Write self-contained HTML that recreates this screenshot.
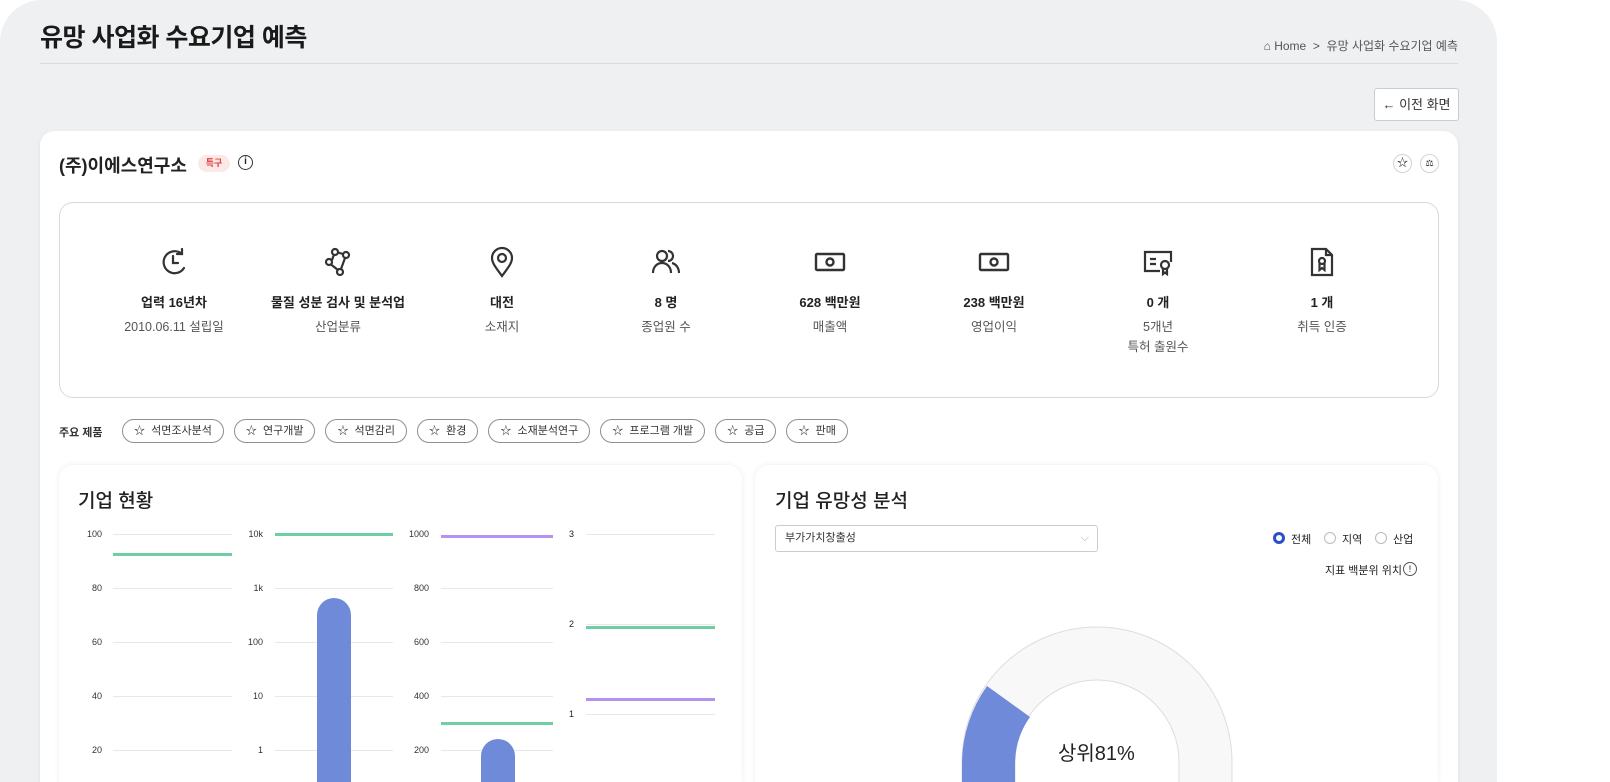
<!DOCTYPE html>
<html style="width:1610px;height:782px;overflow:hidden"><head><meta charset="utf-8"><style>
*{box-sizing:border-box;margin:0;padding:0}
body{width:1610px;height:782px;overflow:hidden;background:#fff;font-family:"Liberation Sans","Noto Sans CJK KR",sans-serif;color:#222;position:relative}
.abs{position:absolute}
.panel{left:0;top:0;width:1497px;height:782px;background:#eff0f2;border-radius:42px 42px 0 0}
h1{position:absolute;left:40px;top:18px;font-size:25px;font-weight:700;color:#1a1a1a;letter-spacing:-0.5px}
.hr{left:40px;top:63px;width:1418px;height:1px;background:#d9dbe0}
.bc{right:152px;top:37px;font-size:12px;color:#555}
.btn{left:1374px;top:88px;width:85px;height:33px;background:#fff;border:1px solid #c9ccd3;border-radius:3px;font-size:13px;color:#333;text-align:center;line-height:31px}
.card{left:40px;top:131px;width:1418px;height:651px;background:#fff;border-radius:14px 14px 0 0;box-shadow:0 1px 4px rgba(0,0,0,.08)}
.cname{left:59px;top:152px;font-size:18px;font-weight:700;color:#222}
.tag{left:198px;top:155px;width:32px;height:17px;background:#fde8e8;color:#e0403c;font-size:9px;border-radius:9px;text-align:center;line-height:17px;font-weight:700}
.circ{width:19px;height:19px;border:1px solid #d0d3d8;border-radius:50%;top:154px}
.info{left:59px;top:202px;width:1380px;height:196px;border:1px solid #d6d9de;border-radius:14px}
.it{position:absolute;top:246px;width:160px;text-align:center}
.it svg{display:block;margin:0 auto 14px}
.it b{display:block;font-size:13px;font-weight:700;color:#222;margin-bottom:6px}
.it span{font-size:12.5px;color:#555;line-height:20px}
.pl{left:59px;top:424px;font-size:11px;font-weight:700;color:#333}
.chips{left:122px;top:419px;display:flex;gap:10px}
.chip{height:24px;border:1px solid #8a8f98;border-radius:12px;padding:0 11px;font-size:11px;color:#333;line-height:22px}
.sub{background:#fff;border-radius:14px 14px 0 0;box-shadow:0 0 6px rgba(0,0,0,.08);top:465px;height:317px}
.st{font-size:19px;font-weight:500;color:#222;top:486px}
.ax{font-size:9px;color:#333;text-align:right;width:30px}
.gl{height:1px;background:#e8e8e8}
.ln{height:3px}
.g{background:#6fcfa3}.p{background:#b392f0}
.bar{background:#6f8ad9;border-radius:17px 17px 0 0}
</style></head><body>
<div class="abs panel"></div>
<h1>유망 사업화 수요기업 예측</h1>
<div class="abs bc">⌂ Home &nbsp;&gt;&nbsp; 유망 사업화 수요기업 예측</div>
<div class="abs hr"></div>
<div class="abs btn">← 이전 화면</div>
<div class="abs card"></div>
<div class="abs cname">(주)이에스연구소</div>
<div class="abs tag">특구</div>
<div class="abs" style="left:238px;top:155px;width:15px;height:15px;border:1.5px solid #333;border-radius:50%;font-size:10px;text-align:center;line-height:12px;font-weight:700">i</div>
<div class="abs circ" style="left:1393px;font-size:11px;text-align:center;line-height:17px">☆</div>
<div class="abs circ" style="left:1420px;font-size:9px;text-align:center;line-height:17px">⚖</div>
<div class="abs info"></div>

<div class="it" style="left:94px"><svg width="32" height="32" viewBox="0 0 32 32" fill="none" stroke="#333" stroke-width="2.2" stroke-linecap="round"><path d="M24 8A11 11 0 1 0 26 22"/><path d="M24 3v5h-5"/><path d="M15 10v7h5"/></svg><b>업력 16년차</b><span>2010.06.11 설립일</span></div>
<div class="it" style="left:258px"><svg width="32" height="32" viewBox="0 0 32 32" fill="none" stroke="#333" stroke-width="2.2"><circle cx="13" cy="6" r="3"/><circle cx="24" cy="9" r="3"/><circle cx="7" cy="16" r="3"/><circle cx="18" cy="26" r="3"/><path d="M16 6.5l5 1.5M10 14l2-5.5M9 18.5l7 5.5M23 12l-4 11"/></svg><b>물질 성분 검사 및 분석업</b><span>산업분류</span></div>
<div class="it" style="left:422px"><svg width="32" height="32" viewBox="0 0 32 32" fill="none" stroke="#333" stroke-width="2.2"><path d="M16 30C10 22 6 17 6 12a10 10 0 0 1 20 0c0 5-4 10-10 18z"/><circle cx="16" cy="12" r="4"/></svg><b>대전</b><span>소재지</span></div>
<div class="it" style="left:586px"><svg width="32" height="32" viewBox="0 0 32 32" fill="none" stroke="#333" stroke-width="2.2"><circle cx="12" cy="10" r="5"/><path d="M3 27c0-6 4-10 9-10s9 4 9 10"/><path d="M18 5a5 5 0 0 1 0 10M22 17c4 1 7 5 7 10"/></svg><b>8 명</b><span>종업원 수</span></div>
<div class="it" style="left:750px"><svg width="32" height="32" viewBox="0 0 32 32" fill="none" stroke="#333" stroke-width="2.4"><rect x="2" y="8" width="28" height="16" rx="1"/><circle cx="16" cy="16" r="3.5"/><path d="M6 12v0M26 20v0" stroke-width="3"/></svg><b>628 백만원</b><span>매출액</span></div>
<div class="it" style="left:914px"><svg width="32" height="32" viewBox="0 0 32 32" fill="none" stroke="#333" stroke-width="2.4"><rect x="2" y="8" width="28" height="16" rx="1"/><circle cx="16" cy="16" r="3.5"/><path d="M6 12v0M26 20v0" stroke-width="3"/></svg><b>238 백만원</b><span>영업이익</span></div>
<div class="it" style="left:1078px"><svg width="32" height="32" viewBox="0 0 32 32" fill="none" stroke="#333" stroke-width="2.2"><path d="M18 25H3V6h26v10"/><path d="M8 13h6M8 18h6"/><circle cx="23" cy="19" r="4"/><path d="M21 23v5l2-1.5 2 1.5v-5"/></svg><b>0 개</b><span>5개년<br>특허 출원수</span></div>
<div class="it" style="left:1242px"><svg width="32" height="32" viewBox="0 0 32 32" fill="none" stroke="#333" stroke-width="2.2"><path d="M6 3h14l6 6v20H6z"/><path d="M20 3v6h6"/><circle cx="16" cy="15" r="3"/><path d="M13.5 17v7l2.5-2 2.5 2v-7"/></svg><b>1 개</b><span>취득 인증</span></div>

<div class="abs pl">주요 제품</div>
<div class="abs chips">
<div class="chip">☆ &nbsp;석면조사분석</div><div class="chip">☆ &nbsp;연구개발</div><div class="chip">☆ &nbsp;석면감리</div><div class="chip">☆ &nbsp;환경</div><div class="chip">☆ &nbsp;소재분석연구</div><div class="chip">☆ &nbsp;프로그램 개발</div><div class="chip">☆ &nbsp;공급</div><div class="chip">☆ &nbsp;판매</div>
</div>

<div class="abs sub" style="left:59px;width:683px"></div>
<div class="abs sub" style="left:755px;width:683px"></div>
<div class="abs st" style="left:78px">기업 현황</div>
<div class="abs st" style="left:775px">기업 유망성 분석</div>

<div class="abs ax" style="left:72px;top:529px">100</div>
<div class="abs ax" style="left:72px;top:583px">80</div>
<div class="abs ax" style="left:72px;top:637px">60</div>
<div class="abs ax" style="left:72px;top:691px">40</div>
<div class="abs ax" style="left:72px;top:745px">20</div>
<div class="abs gl" style="left:113px;top:534px;width:119px"></div>
<div class="abs gl" style="left:113px;top:588px;width:119px"></div>
<div class="abs gl" style="left:113px;top:642px;width:119px"></div>
<div class="abs gl" style="left:113px;top:696px;width:119px"></div>
<div class="abs gl" style="left:113px;top:750px;width:119px"></div>
<div class="abs ln g" style="left:113px;top:553px;width:119px"></div>

<div class="abs ax" style="left:233px;top:529px">10k</div>
<div class="abs ax" style="left:233px;top:583px">1k</div>
<div class="abs ax" style="left:233px;top:637px">100</div>
<div class="abs ax" style="left:233px;top:691px">10</div>
<div class="abs ax" style="left:233px;top:745px">1</div>
<div class="abs gl" style="left:275px;top:588px;width:118px"></div>
<div class="abs gl" style="left:275px;top:642px;width:118px"></div>
<div class="abs gl" style="left:275px;top:696px;width:118px"></div>
<div class="abs gl" style="left:275px;top:750px;width:118px"></div>
<div class="abs ln g" style="left:275px;top:533px;width:118px"></div>
<div class="abs bar" style="left:317px;top:598px;width:34px;height:184px"></div>

<div class="abs ax" style="left:399px;top:529px">1000</div>
<div class="abs ax" style="left:399px;top:583px">800</div>
<div class="abs ax" style="left:399px;top:637px">600</div>
<div class="abs ax" style="left:399px;top:691px">400</div>
<div class="abs ax" style="left:399px;top:745px">200</div>
<div class="abs gl" style="left:441px;top:588px;width:112px"></div>
<div class="abs gl" style="left:441px;top:642px;width:112px"></div>
<div class="abs gl" style="left:441px;top:696px;width:112px"></div>
<div class="abs gl" style="left:441px;top:750px;width:112px"></div>
<div class="abs ln p" style="left:441px;top:535px;width:112px"></div>
<div class="abs ln g" style="left:441px;top:722px;width:112px"></div>
<div class="abs bar" style="left:481px;top:739px;width:34px;height:43px"></div>

<div class="abs" style="left:569px;top:529px;font-size:9px">3</div>
<div class="abs" style="left:569px;top:619px;font-size:9px">2</div>
<div class="abs" style="left:569px;top:709px;font-size:9px">1</div>
<div class="abs gl" style="left:586px;top:534px;width:129px"></div>
<div class="abs gl" style="left:586px;top:624px;width:129px"></div>
<div class="abs gl" style="left:586px;top:714px;width:129px"></div>
<div class="abs ln g" style="left:586px;top:626px;width:129px"></div>
<div class="abs ln p" style="left:586px;top:698px;width:129px"></div>

<div class="abs" style="left:775px;top:525px;width:323px;height:27px;border:1px solid #c9ccd3;border-radius:3px;font-size:11px;color:#333;line-height:25px;padding-left:9px">부가가치창출성<span style="position:absolute;right:8px;color:#aaa">⌵</span></div>
<div class="abs" style="left:1273px;top:532px;width:12px;height:12px;border-radius:50%;border:3.5px solid #2b4fc9;background:#fff"></div>
<div class="abs" style="left:1291px;top:531px;font-size:11px">전체</div>
<div class="abs" style="left:1324px;top:532px;width:12px;height:12px;border-radius:50%;border:1px solid #bbb"></div>
<div class="abs" style="left:1342px;top:531px;font-size:11px">지역</div>
<div class="abs" style="left:1375px;top:532px;width:12px;height:12px;border-radius:50%;border:1px solid #bbb"></div>
<div class="abs" style="left:1393px;top:531px;font-size:11px">산업</div>
<div class="abs" style="left:1325px;top:562px;font-size:11px">지표 백분위 위치</div>
<div class="abs" style="left:1403px;top:562px;width:14px;height:14px;border:1px solid #555;border-radius:50%;font-size:9px;text-align:center;line-height:12px">!</div>
<svg class="abs" style="left:950px;top:615px" width="300" height="167" viewBox="0 0 300 167">
<path d="M12 170V147A135 135 0 0 1 282 147V170H229V147A82 82 0 0 0 65 147V170Z" fill="#f8f8f8" stroke="#ddd" stroke-width="1"/>
<path d="M12 170V147A135 135 0 0 1 37 71L80 102A82 82 0 0 0 65 147V170Z" fill="#6f8ad9"/>
</svg>
<div class="abs" style="left:1058px;top:737px;font-size:20px;color:#222">상위81%</div>
</body></html>
